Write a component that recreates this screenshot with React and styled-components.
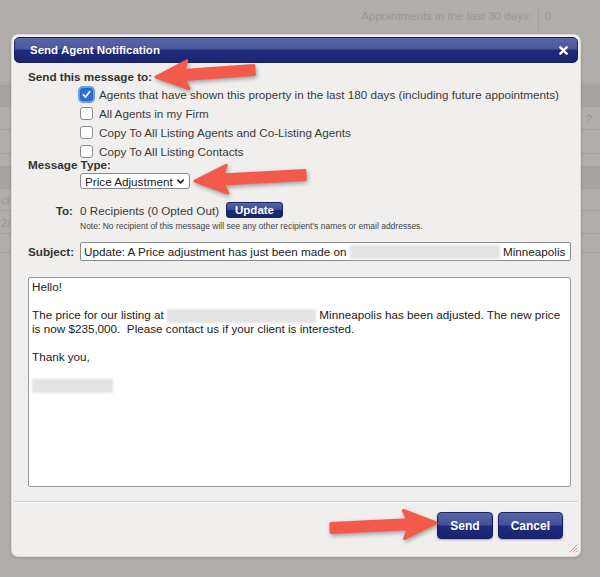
import React from "react";
import styled, { createGlobalStyle } from "styled-components";

const GlobalStyle = createGlobalStyle`
  html, body {
    margin: 0;
    padding: 0;
    background: #b2aeac;
  }
  body {
    font-family: "Liberation Sans", Arial, sans-serif;
  }
`;

const recipientsOptions = [
  { label: "Agents that have shown this property in the last 180 days (including future appointments)", checked: true },
  { label: "All Agents in my Firm", checked: false },
  { label: "Copy To All Listing Agents and Co-Listing Agents", checked: false },
  { label: "Copy To All Listing Contacts", checked: false },
];

// arrow polygon from tail (x1,y1) to tip (x2,y2)
function arrowPoints(x1, y1, x2, y2, shaft = 9, headLen = 28, headW = 28) {
  const dx = x2 - x1;
  const dy = y2 - y1;
  const len = Math.hypot(dx, dy);
  const ux = dx / len;
  const uy = dy / len;
  const nx = -uy;
  const ny = ux;
  const bx = x2 - ux * headLen;
  const by = y2 - uy * headLen;
  const wx = bx - ux * 4;
  const wy = by - uy * 4;
  const pts = [
    [x1 + (nx * shaft) / 2, y1 + (ny * shaft) / 2],
    [bx + (nx * shaft) / 2, by + (ny * shaft) / 2],
    [wx + (nx * headW) / 2, wy + (ny * headW) / 2],
    [x2, y2],
    [wx - (nx * headW) / 2, wy - (ny * headW) / 2],
    [bx - (nx * shaft) / 2, by - (ny * shaft) / 2],
    [x1 - (nx * shaft) / 2, y1 - (ny * shaft) / 2],
  ];
  return pts.map((p) => p.map((v) => v.toFixed(1)).join(",")).join(" ");
}

const arrows = [
  { x1: 254, y1: 70, x2: 156, y2: 77 },
  { x1: 305, y1: 175, x2: 195, y2: 181 },
  { x1: 331, y1: 528, x2: 436, y2: 523 },
];

const App = () => {
  return (
    <>
      <GlobalStyle />
      <Page>
        <Backdrop>
          <Stats>
            <StatLabel>Appointments in the last 30 days:</StatLabel>
            <StatValue>0</StatValue>
            <StatLabel>Appointments in the last 7 days:</StatLabel>
            <StatValue>0</StatValue>
          </Stats>
          <BgTable>
            <BgRow $dark />
            <BgRow $h={22}>
              <BgCell $right>?</BgCell>
            </BgRow>
            <BgRow $h={23} />
            <BgRow $h={10} $noLine />
            <BgRow $dark />
            <BgRow $h={21}>
              <BgCell>ctio</BgCell>
            </BgRow>
            <BgRow $h={22}>
              <BgCell>2/1</BgCell>
            </BgRow>
            <BgRow $h={18} />
          </BgTable>
        </Backdrop>

        <Dialog>
          <TitleBar>
            <Title>Send Agent Notification</Title>
            <CloseIcon viewBox="0 0 10 10">
              <path d="M1.5 1.5 L8.5 8.5 M8.5 1.5 L1.5 8.5" stroke="#fff" strokeWidth="2.6" strokeLinecap="round" />
            </CloseIcon>
          </TitleBar>

          <Body>
            <Heading>Send this message to:</Heading>
            <OptionList>
              {recipientsOptions.map((opt) => (
                <OptionRow key={opt.label}>
                  <CheckBox $checked={opt.checked}>
                    {opt.checked && (
                      <svg viewBox="0 0 12 12" width="11" height="11">
                        <path d="M2.5 6.3 L5 8.8 L9.6 2.8" fill="none" stroke="#fff" strokeWidth="1.8" strokeLinecap="round" strokeLinejoin="round" />
                      </svg>
                    )}
                  </CheckBox>
                  <span>{opt.label}</span>
                </OptionRow>
              ))}
            </OptionList>

            <TypeLabel>Message Type:</TypeLabel>
            <Indent>
              <Select>
                Price Adjustment
                <svg viewBox="0 0 10 10" width="9" height="9">
                  <path d="M2 3.5 L5 6.5 L8 3.5" fill="none" stroke="#222" strokeWidth="1.8" strokeLinecap="round" strokeLinejoin="round" />
                </svg>
              </Select>
            </Indent>

            <FieldRow $mt={13}>
              <FieldLabel $right>To:</FieldLabel>
              <Recipients>
                0 Recipients (0 Opted Out)
                <SmallButton>Update</SmallButton>
              </Recipients>
            </FieldRow>
            <Note>Note: No recipient of this message will see any other recipient's names or email addresses.</Note>

            <FieldRow $mt={11}>
              <FieldLabel>Subject:</FieldLabel>
              <TextField>
                Update: A Price adjustment has just been made on <Blur $w={150} /> Minneapolis
              </TextField>
            </FieldRow>

            <MessageBox>
              <Line>Hello!</Line>
              <Line>&nbsp;</Line>
              <Line>
                The price for our listing at <Blur $w={149} /> Minneapolis has been adjusted. The new price
              </Line>
              <Line>is now $235,000.&nbsp; Please contact us if your client is interested.</Line>
              <Line>&nbsp;</Line>
              <Line>Thank you,</Line>
              <Line>&nbsp;</Line>
              <Line>
                <Blur $w={81} />
              </Line>
            </MessageBox>
          </Body>

          <Footer>
            <Button>Send</Button>
            <Button>Cancel</Button>
          </Footer>

          <Grip viewBox="0 0 10 10">
            <path d="M9.5 1.5 L1.5 9.5 M9.5 4.5 L4.5 9.5 M9.5 7.5 L7.5 9.5" stroke="#e38c86" strokeWidth="0.9" />
          </Grip>
        </Dialog>

        <Annotations viewBox="0 0 600 577">
          {arrows.map((a, i) => (
            <polygon
              key={i}
              points={arrowPoints(a.x1, a.y1, a.x2, a.y2)}
              fill="#f45a4b"
              stroke="#f45a4b"
              strokeWidth="3"
              strokeLinejoin="round"
            />
          ))}
        </Annotations>
      </Page>
    </>
  );
};

const Page = styled.div`
  position: relative;
  width: 600px;
  height: 577px;
  overflow: hidden;
  background: #b2aeac;
  font-family: "Liberation Sans", Arial, sans-serif;
`;

const Backdrop = styled.div`
  display: flex;
  flex-direction: column;
`;

const Stats = styled.div`
  display: grid;
  grid-template-columns: auto 61px;
  justify-content: end;
  padding-top: 7px;
  height: 82px;
  box-sizing: border-box;
  font-size: 11.6px;
  line-height: 18px;
  color: #9c9895;
`;

const StatLabel = styled.div`
  text-align: right;
  padding-right: 6px;
  border-right: 1px dotted #9c9895;
`;

const StatValue = styled.div`
  padding-left: 6px;
`;

const BgTable = styled.div`
  display: flex;
  flex-direction: column;
  border-top: 1px dotted #a19e9c;
  margin-top: 0;
`;

const BgRow = styled.div`
  height: ${(p) => (p.$dark ? 22 : p.$h)}px;
  background: ${(p) => (p.$dark ? "#a7a3a1" : "transparent")};
  border-bottom: 1px solid ${(p) => (p.$noLine ? "transparent" : "#a5a19f")};
  display: flex;
  align-items: center;
  justify-content: space-between;
  margin-top: ${(p) => (p.$dark ? 1 : 0)}px;
`;

const BgCell = styled.div`
  font-size: 11.6px;
  color: #9a9693;
  margin-left: ${(p) => (p.$right ? "auto" : "1px")};
  margin-right: ${(p) => (p.$right ? "8px" : "0")};
`;

const Dialog = styled.div`
  position: absolute;
  left: 12px;
  top: 35px;
  width: 568px;
  height: 521px;
  box-sizing: border-box;
  padding: 2px;
  background: #f0efee;
  border-radius: 6px;
  box-shadow: 0 0 0 1px #dcdad8, 0 1px 4px rgba(0, 0, 0, 0.25);
  display: flex;
  flex-direction: column;
`;

const TitleBar = styled.div`
  height: 26px;
  flex: none;
  border-radius: 5px;
  display: flex;
  align-items: center;
  justify-content: space-between;
  padding: 0 9px 0 15px;
  background: linear-gradient(#5966a6 0%, #4a5799 45%, #1f2b7a 52%, #1b2673 100%);
  border: 1px solid #1a2367;
  box-sizing: border-box;
`;

const Title = styled.span`
  color: #fff;
  font-weight: 700;
  font-size: 11.5px;
`;

const CloseIcon = styled.svg`
  width: 9px;
  height: 9px;
`;

const Body = styled.div`
  padding: 7px 7px 0 14px;
  display: flex;
  flex-direction: column;
  color: #333;
  font-size: 11.7px;
`;

const Heading = styled.div`
  font-weight: 700;
  line-height: 14px;
  color: #333;
`;

const OptionList = styled.div`
  display: flex;
  flex-direction: column;
  margin: 1px 0 0 52px;
`;

const OptionRow = styled.div`
  height: 19px;
  display: flex;
  align-items: center;
  gap: 6px;
  color: #3a3a3a;
`;

const CheckBox = styled.span`
  width: 13px;
  height: 13px;
  box-sizing: border-box;
  border-radius: 3px;
  display: flex;
  align-items: center;
  justify-content: center;
  background: ${(p) => (p.$checked ? "#2e6fd9" : "#fff")};
  border: 1px solid ${(p) => (p.$checked ? "#2a62c4" : "#8c8c8c")};
  box-shadow: ${(p) => (p.$checked ? "0 0 0 2px #6e9ee9" : "none")};
`;

const TypeLabel = styled.div`
  font-weight: 700;
  line-height: 12px;
  margin-top: -2px;
`;

const Indent = styled.div`
  margin-left: 52px;
  margin-top: 2px;
  display: flex;
`;

const Select = styled.div`
  height: 16px;
  width: 110px;
  box-sizing: border-box;
  background: #fff;
  border: 1px solid #8a8a8a;
  border-radius: 3px;
  display: flex;
  align-items: center;
  justify-content: space-between;
  padding: 0 4px 0 4px;
  color: #222;
`;

const FieldRow = styled.div`
  display: grid;
  grid-template-columns: 52px 1fr;
  align-items: center;
  margin-top: ${(p) => p.$mt}px;
`;

const FieldLabel = styled.div`
  font-weight: 700;
  text-align: ${(p) => (p.$right ? "right" : "left")};
  padding-right: ${(p) => (p.$right ? "7px" : "0")};
  color: #333;
`;

const Recipients = styled.div`
  display: flex;
  align-items: center;
  gap: 7px;
  color: #3a3a3a;
`;

const SmallButton = styled.button`
  height: 16px;
  padding: 0 8px;
  border: 1px solid #1a2367;
  border-radius: 3px;
  background: linear-gradient(#5564a5 0%, #3d4a92 48%, #1e2a79 52%, #19246f 100%);
  color: #fff;
  font-family: inherit;
  font-weight: 700;
  font-size: 11.5px;
  line-height: 14px;
`;

const Note = styled.div`
  margin: 3px 0 0 52px;
  font-size: 8.5px;
  line-height: 10px;
  color: #444;
`;

const TextField = styled.div`
  height: 19px;
  box-sizing: border-box;
  background: #fff;
  border: 1px solid #8c8c8c;
  border-radius: 2px;
  padding: 0 3px;
  display: flex;
  align-items: center;
  white-space: pre;
  color: #222;
`;

const Blur = styled.span`
  display: inline-block;
  width: ${(p) => p.$w}px;
  height: 14px;
  background: #e3e3e3;
  filter: blur(1.2px);
  vertical-align: middle;
`;

const MessageBox = styled.div`
  margin-top: 16px;
  height: 210px;
  box-sizing: border-box;
  background: #fff;
  border: 1px solid #9a9a9a;
  border-radius: 2px;
  padding: 2px 3px;
  color: #222;
`;

const Line = styled.div`
  line-height: 14px;
  height: 14px;
  white-space: pre;
`;

const Footer = styled.div`
  margin-top: 14px;
  border-top: 1px solid #cdcbc9;
  box-shadow: inset 0 1px 0 #fafafa;
  padding: 10px 15px 0 0;
  display: flex;
  justify-content: flex-end;
  gap: 5px;
`;

const Button = styled.button`
  height: 27px;
  padding: 0 12px;
  border: 1px solid #1a2263;
  border-radius: 4px;
  background: linear-gradient(#5766a6 0%, #43519a 48%, #1f2b7b 52%, #19246f 100%);
  color: #fff;
  font-family: inherit;
  font-weight: 700;
  font-size: 12px;
  box-shadow: 0 1px 2px rgba(0, 0, 0, 0.3);
`;

const Grip = styled.svg`
  position: absolute;
  right: 2px;
  bottom: 3px;
  width: 10px;
  height: 10px;
`;

const Annotations = styled.svg`
  position: absolute;
  inset: 0;
  width: 600px;
  height: 577px;
  pointer-events: none;
  filter: drop-shadow(1px 2px 2px rgba(0, 0, 0, 0.35));
`;

export default App;
